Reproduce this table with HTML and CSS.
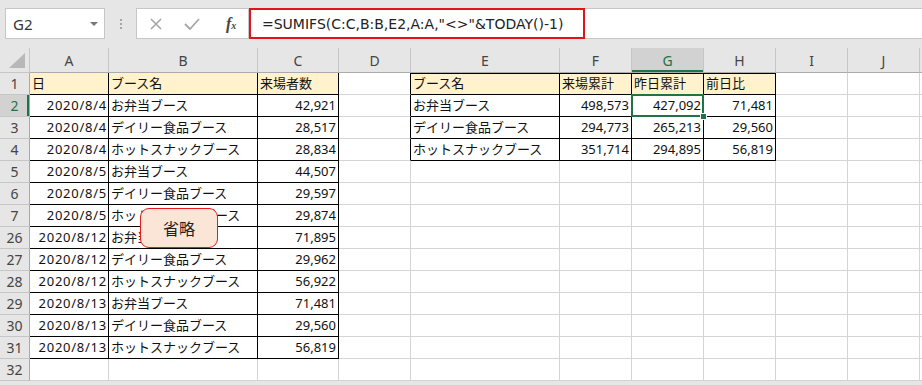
FILE: index.html
```html
<!DOCTYPE html>
<html lang="ja">
<head>
    <meta charset="UTF-8">
    <title>来場者集計</title>
    <link rel="stylesheet" href="styles.css">
</head>
<body>
    <div class="formula-bar">
        <div class="name-box">
            <span>G2</span>
            <span class="caret"></span>
        </div>
        <div class="grip"><i></i><i></i><i></i></div>
        <div class="fx-buttons">
            <svg width="12" height="12" viewBox="0 0 12 12"><path d="M1 1L11 11M11 1L1 11" stroke="#a6a6a6" stroke-width="1.6" fill="none"/></svg>
            <svg width="16" height="12" viewBox="0 0 16 12"><path d="M1 6L6 11L15 1" stroke="#a6a6a6" stroke-width="1.8" fill="none"/></svg>
            <span class="fx"><i>f</i><small>x</small></span>
        </div>
        <div class="formula">
            <span class="formula-mark">=SUMIFS(C:C,B:B,E2,A:A,"&lt;&gt;"&amp;TODAY()-1)</span>
        </div>
    </div>

    <div class="sheet" id="sheet">
        <!-- cells are built below -->
    </div>

    <div class="note">省略</div>

    <script>
        const cols = ['A', 'B', 'C', 'D', 'E', 'F', 'G', 'H', 'I', 'J', ''];
        const rowNums = [1, 2, 3, 4, 5, 6, 7, 26, 27, 28, 29, 30, 31, 32];

        const visits = [
            ['日', 'ブース名', '来場者数'],
            ['2020/8/4', 'お弁当ブース', '42,921'],
            ['2020/8/4', 'デイリー食品ブース', '28,517'],
            ['2020/8/4', 'ホットスナックブース', '28,834'],
            ['2020/8/5', 'お弁当ブース', '44,507'],
            ['2020/8/5', 'デイリー食品ブース', '29,597'],
            ['2020/8/5', 'ホットスナックブース', '29,874'],
            ['2020/8/12', 'お弁当ブース', '71,895'],
            ['2020/8/12', 'デイリー食品ブース', '29,962'],
            ['2020/8/12', 'ホットスナックブース', '56,922'],
            ['2020/8/13', 'お弁当ブース', '71,481'],
            ['2020/8/13', 'デイリー食品ブース', '29,560'],
            ['2020/8/13', 'ホットスナックブース', '56,819']
        ];

        const totals = [
            ['ブース名', '来場累計', '昨日累計', '前日比'],
            ['お弁当ブース', '498,573', '427,092', '71,481'],
            ['デイリー食品ブース', '294,773', '265,213', '29,560'],
            ['ホットスナックブース', '351,714', '294,895', '56,819']
        ];

        const sheet = document.getElementById('sheet');

        function addCell(cls, text) {
            const cell = document.createElement('div');
            cell.className = cls;
            if (text) cell.textContent = text;
            sheet.appendChild(cell);
            return cell;
        }

        // column headers
        addCell('corner');
        cols.forEach(c => addCell(c === 'G' ? 'col-head active' : 'col-head', c));

        rowNums.forEach((num, r) => {
            addCell(r === 1 ? 'row-head active' : 'row-head', num);

            cols.forEach((c, ci) => {
                let cls = 'cell';
                let text = '';

                // A:C visits table
                if (ci <= 2 && r < visits.length) {
                    cls += ' boxed';
                    text = visits[r][ci];
                    if (r === 0) cls += ' title';
                    else if (ci !== 1) cls += ' right';
                    if (r > 0 && ci === 0) cls += ' date';
                }

                // E:H totals table
                if (ci >= 4 && ci <= 7 && r < totals.length) {
                    cls += ' boxed';
                    text = totals[r][ci - 4];
                    if (r === 0) cls += ' title top';
                    else if (ci !== 4) cls += ' right';
                }
                if (ci === 3 && r < totals.length) cls += ' edge';

                if (c === 'G' && r === 1) cls += ' selected';
                if (c === '') cls += ' filler';

                addCell(cls, text);
            });
        });
    </script>
</body>
</html>
```

FILE: styles.css
```css
body {
    margin: 0;
    width: 922px;
    height: 385px;
    overflow: hidden;
    background: #e6e6e6;
    position: relative;
    font-family: "Noto Sans", "Noto Sans CJK JP", sans-serif;
}

/* formula bar */

.formula-bar {
    display: flex;
    align-items: stretch;
    height: 31px;
    padding: 8px 0 9px 5px;
    border-top: 2px solid #ededed;
    margin-top: -2px;
}

.name-box {
    width: 100px;
    background: #fff;
    border: 1px solid #c6c6c6;
    display: flex;
    align-items: center;
    justify-content: space-between;
    padding: 0 6px 0 7px;
    box-sizing: border-box;
    font-size: 15px;
    color: #333;
}

.caret {
    width: 0;
    height: 0;
    border-left: 4px solid transparent;
    border-right: 4px solid transparent;
    border-top: 4px solid #777;
}

.grip {
    width: 31px;
    display: flex;
    flex-direction: column;
    align-items: center;
    justify-content: center;
    gap: 2px;
}

.grip i {
    width: 2px;
    height: 2px;
    background: #a6a6a6;
}

.fx-buttons {
    width: 113px;
    background: #fff;
    border: 1px solid #c6c6c6;
    box-sizing: border-box;
    display: flex;
    align-items: center;
    padding-left: 13px;
    gap: 22px;
}

.fx {
    font-family: "Liberation Serif", serif;
    color: #444;
    font-size: 16px;
    font-weight: bold;
    margin-left: 4px;
}

.fx small {
    font-size: 10px;
    font-style: italic;
}

.formula {
    flex: 1;
    background: #fff;
    border-top: 1px solid #c6c6c6;
    border-bottom: 1px solid #c6c6c6;
    display: flex;
}

.formula-mark {
    width: 336px;
    margin: -1px 0;
    border: 2px solid #e3121b;
    box-sizing: border-box;
    display: flex;
    align-items: center;
    padding-left: 11px;
    font-family: "DejaVu Sans", sans-serif;
    font-size: 14px;
    color: #222;
}

/* sheet grid */

.sheet {
    display: grid;
    grid-template-columns: 30px 79px 149px 81px 72px 149px 72px 72px 72px 72px 72px 1fr;
    grid-template-rows: 25px repeat(14, 22px);
    background: #fff;
}

.corner, .col-head, .row-head {
    background: #e6e6e6;
    color: #444;
    box-sizing: border-box;
}

.corner {
    border-right: 1px solid #c6c6c6;
    border-bottom: 1px solid #c6c6c6;
    position: relative;
}

.corner::after {
    content: "";
    position: absolute;
    left: 9px;
    top: 5px;
    width: 16px;
    height: 15px;
    background: #b8b8b8;
    clip-path: polygon(100% 0, 100% 100%, 0 100%);
}

.col-head {
    border-right: 1px solid #c6c6c6;
    border-bottom: 1px solid #ababab;
    text-align: center;
    font-size: 14px;
    line-height: 25px;
}

.row-head {
    border-right: 1px solid #a8a8a8;
    border-bottom: 1px solid #c6c6c6;
    text-align: center;
    font-size: 14px;
    line-height: 21px;
}

.col-head.active {
    background: #d2d2d2;
    color: #217346;
    box-shadow: inset 0 -2px 0 #217346;
}

.row-head.active {
    background: #d2d2d2;
    color: #217346;
    box-shadow: inset -2px 0 0 #217346;
}

.cell {
    border-right: 1px solid #d4d4d4;
    border-bottom: 1px solid #d4d4d4;
    box-sizing: border-box;
    font-size: 13px;
    line-height: 21px;
    color: #111;
    padding: 0 2px;
    white-space: nowrap;
    position: relative;
}

.cell.boxed {
    border-right-color: #000;
    border-bottom-color: #000;
}

.cell.edge {
    border-right-color: #000;
}

.cell.top {
    box-shadow: inset 0 1px 0 #000;
}

.cell.title {
    background: #fff2cc;
}

.cell.right {
    text-align: right;
}

.cell.date {
    letter-spacing: 0.75px;
    padding-right: 1px;
}

.cell.filler {
    border-right: none;
}

.cell.selected::after {
    content: "";
    position: absolute;
    top: -1px;
    left: -1px;
    right: -1px;
    bottom: -1px;
    border: 2px solid #217346;
    z-index: 2;
}

.cell.selected::before {
    content: "";
    position: absolute;
    right: -4px;
    bottom: -4px;
    width: 5px;
    height: 5px;
    background: #217346;
    border: 1px solid #fff;
    z-index: 3;
}

/* callout over the skipped rows */

.note {
    position: absolute;
    left: 140px;
    top: 208px;
    width: 78px;
    height: 40px;
    box-sizing: border-box;
    border: 1px solid #e81b1b;
    border-radius: 9px;
    background: #fbe5d6;
    display: flex;
    align-items: center;
    justify-content: center;
    font-size: 16px;
    color: #222;
}
```
